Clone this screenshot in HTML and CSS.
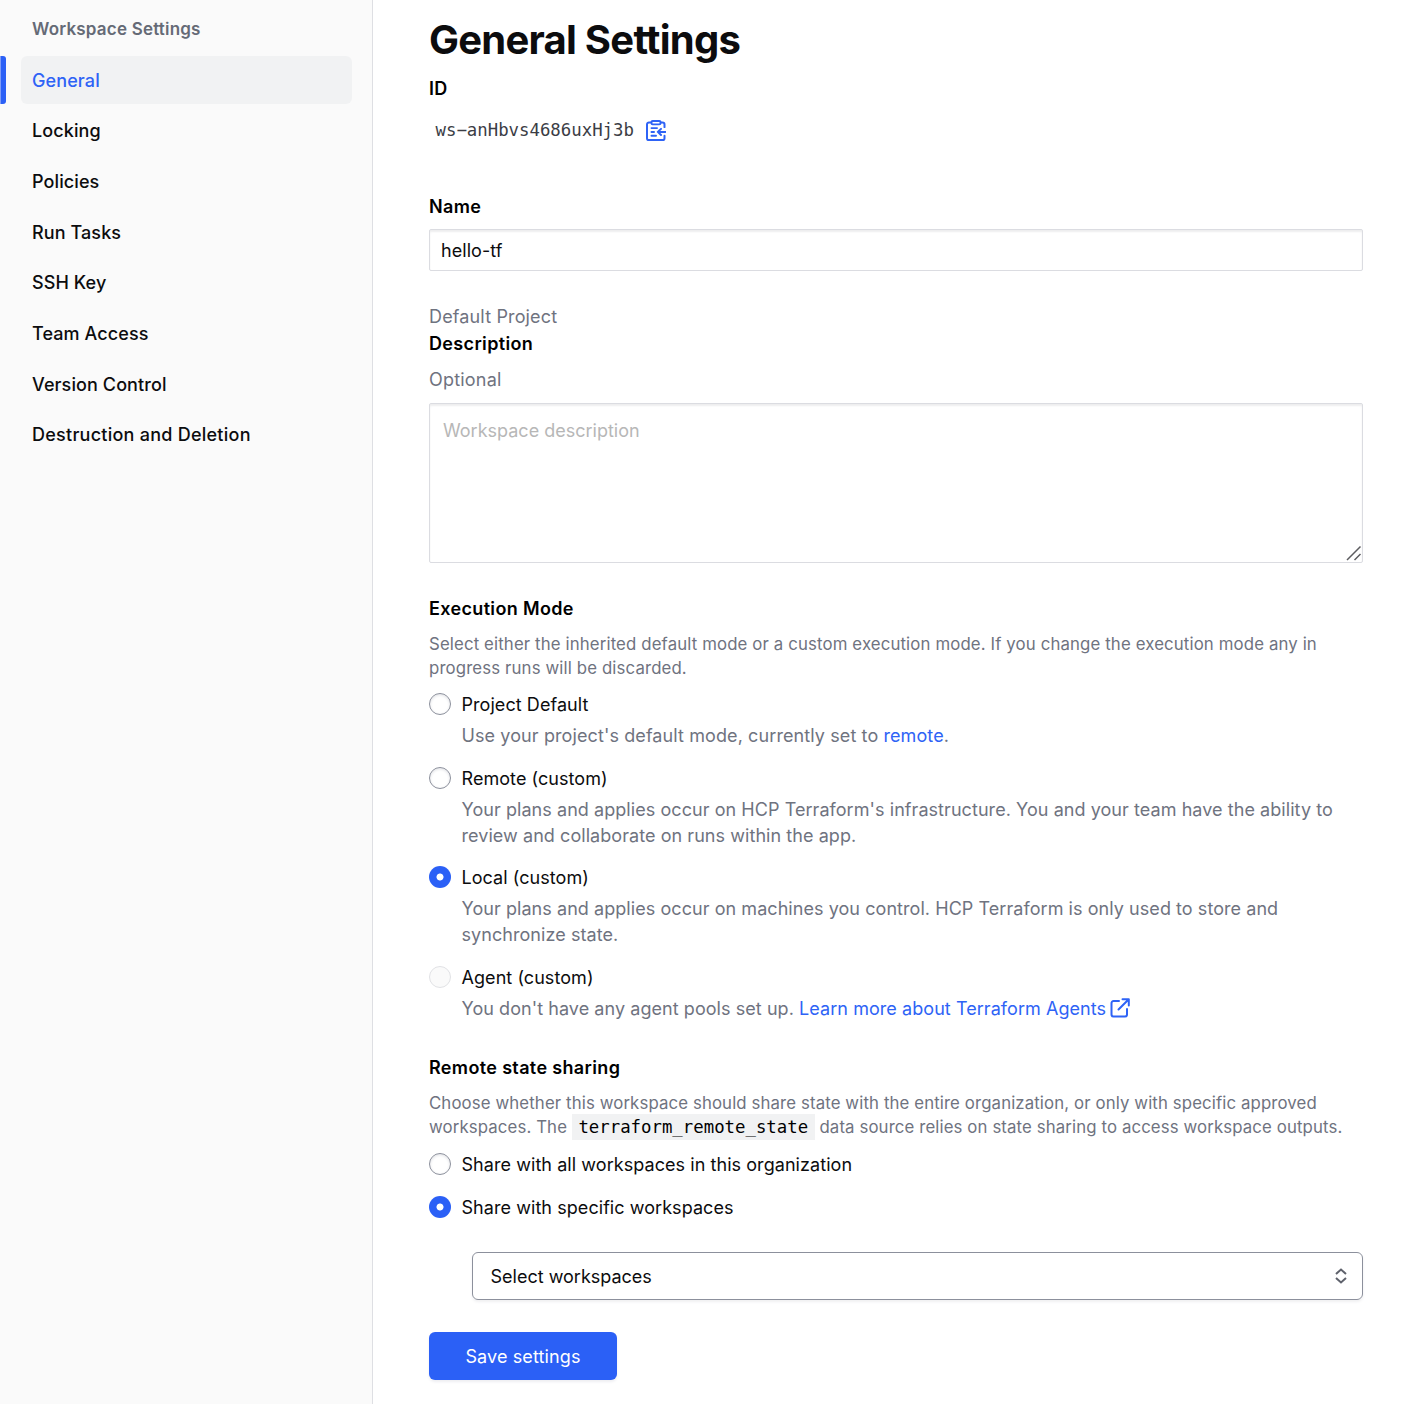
FILE: index.html
```html
<!DOCTYPE html>
<html lang="en">
<head>
<meta charset="utf-8">
<title>General Settings</title>
<link rel="stylesheet" href="styles.css">
</head>
<body>
<div class="app">
  <aside class="sidebar">
    <h2 class="sidebar-title">Workspace Settings</h2>
    <nav class="nav">
      <a class="nav-item active">General</a>
      <a class="nav-item">Locking</a>
      <a class="nav-item">Policies</a>
      <a class="nav-item">Run Tasks</a>
      <a class="nav-item">SSH Key</a>
      <a class="nav-item">Team Access</a>
      <a class="nav-item">Version Control</a>
      <a class="nav-item wide">Destruction and Deletion</a>
    </nav>
  </aside>
  <main class="content">
    <h1 class="title">General Settings</h1>
    <div class="label label-id">ID</div>
    <div class="id-row">
      <span class="id-value">ws−anHbvs4686uxHj3b</span>
      <svg class="icon-copy" viewBox="0 0 20 22" preserveAspectRatio="none" fill="none" stroke="currentColor" stroke-width="2" stroke-linecap="round" stroke-linejoin="round"><path d="M5 2.6H3a2 2 0 0 0-2 2V19a2 2 0 0 0 2 2h13.500a2 2 0 0 0 2-2v-2.500M15 2.600h1.500a2 2 0 0 1 2 2V7.500"/><rect x="5.500" y="1" width="9" height="3.600" rx="1.200"/><path d="M5.500 8.500H11M5.500 12.500H8M5.500 16.500H10M19.500 12.500H12.200M15 9.300l-3.200 3.200 3.200 3.200"/></svg>
    </div>
    <div class="label label-name">Name</div>
    <div class="input">hello-tf</div>
    <div class="project">Default Project</div>
    <div class="label label-description">Description</div>
    <div class="optional">Optional</div>
    <div class="textarea">
      <span class="placeholder">Workspace description</span>
      <svg class="grip" viewBox="0 0 16 16" fill="none" stroke="#5c5c60" stroke-width="1.500"><path d="M1 15 14.500 1.500M8.500 15l6-6"/></svg>
    </div>
    <section class="section">
      <h3 class="label">Execution Mode</h3>
      <p class="help">Select either the inherited default mode or a custom execution mode. If you change the execution mode any in<br>progress runs will be discarded.</p>
      <div class="option"><span class="radio"></span><span class="option-label">Project Default</span>
        <p class="option-text short">Use your project's default mode, currently set to <a class="link">remote</a>.</p></div>
      <div class="option"><span class="radio"></span><span class="option-label">Remote (custom)</span>
        <p class="option-text">Your plans and applies occur on HCP Terraform's infrastructure. You and your team have the ability to<br>review and collaborate on runs within the app.</p></div>
      <div class="option"><span class="radio checked"></span><span class="option-label">Local (custom)</span>
        <p class="option-text">Your plans and applies occur on machines you control. HCP Terraform is only used to store and<br>synchronize state.</p></div>
      <div class="option"><span class="radio disabled"></span><span class="option-label">Agent (custom)</span>
        <p class="option-text">You don't have any agent pools set up. <a class="link">Learn more about Terraform Agents<svg class="icon-external" viewBox="0 0 20 20" fill="none" stroke="currentColor" stroke-width="2" stroke-linecap="round" stroke-linejoin="round"><path d="M9 3H3.500a2 2 0 0 0-2 2v11.500a2 2 0 0 0 2 2H15a2 2 0 0 0 2-2V11M12.500 1.200h6.300v6.300M18.500 1.500 8.500 11.500"/></svg></a></p></div>
    </section>
    <section class="section sharing">
      <h3 class="label">Remote state sharing</h3>
      <p class="help">Choose whether this workspace should share state with the entire organization, or only with specific approved<br>workspaces. The <code class="code">terraform_remote_state</code> data source relies on state sharing to access workspace outputs.</p>
      <div class="option"><span class="radio"></span><span class="option-label">Share with all workspaces in this organization</span></div>
      <div class="option"><span class="radio checked"></span><span class="option-label">Share with specific workspaces</span></div>
    </section>
    <div class="select">
      <span class="select-value">Select workspaces</span>
      <svg class="icon-caret" viewBox="0 0 12 16" fill="none" stroke="#5f626c" stroke-width="2"><path d="M1 6 6 1.500 11 6M1 10l5 4.500L11 10"/></svg>
    </div>
    <button class="save" type="button">Save settings</button>
  </main>
</div>
</body>
</html>
```
FILE: styles.css
```css
* { box-sizing: border-box; }
body {
  margin: 0;
  font: 400 18px/25px Inter, "Liberation Sans", sans-serif;
  letter-spacing: 0.06px;
  color: #0c0c0e;
  background: #fff;
}
h1, h2, h3, p { margin: 0; }
.app { display: flex; min-height: 1404px; }
.sidebar {
  flex: 0 0 373px;
  padding: 17px 20px 0 21px;
  background: #fafafa;
  border-right: 1px solid #dedfe3;
}
.sidebar-title {
  padding-left: 11px;
  font-size: 17px;
  line-height: 25px;
  font-weight: 600;
  letter-spacing: 0.2px;
  color: #656a76;
}
.nav { display: flex; flex-direction: column; gap: 2.650px; margin-top: 13.800px; }
.nav-item {
  position: relative;
  height: 48px;
  padding-left: 11px;
  line-height: 49px;
  font-weight: 500;
  letter-spacing: 0.1px;
  border-radius: 6px;
}
.nav-item.wide { letter-spacing: 0.25px; }
.nav-item.active { color: #2e63f6; background: #f1f2f3; }
.nav-item.active::before {
  content: "";
  position: absolute;
  left: -21px;
  top: 0;
  width: 5px;
  height: 48px;
  background: #2b60f6;
  border-left: 1px solid #7f9df8;
  border-radius: 0 3px 3px 0;
}
.content { flex: 1; padding: 16px 47px 0 56px; }
.title { font-size: 40px; line-height: 48px; font-weight: 700; letter-spacing: -0.750px; }
.label { font-size: 18px; line-height: 25px; font-weight: 600; letter-spacing: 0.350px; color: #000; }
.label-id { margin-top: 12px; }
.id-row {
  display: flex;
  align-items: center;
  height: 25px;
  margin-top: 17px;
  padding-left: 6.500px;
  gap: 12px;
}
.id-value { font: 17.350px/25px "DejaVu Sans Mono", monospace; letter-spacing: 0; color: #3b3d45; }
.icon-copy { width: 20px; height: 21px; color: #2e63f6; }
.label-name { margin-top: 51px; }
.input {
  height: 42px;
  margin-top: 10px;
  padding: 0 11px;
  line-height: 41px;
  border: 1px solid #dbdce1;
  border-radius: 2px;
  box-shadow: inset 0 2px 2px #eeeeef;
}
.project { margin-top: 32px; line-height: 27px; letter-spacing: 0.150px; color: #6f737f; }
.label-description { line-height: 27px; }
.optional { margin-top: 10px; letter-spacing: 0.200px; color: #6f737f; }
.textarea {
  display: flex;
  justify-content: space-between;
  height: 160px;
  margin-top: 11px;
  padding: 14px 0 1px 13px;
  border: 1px solid #dbdce1;
  border-radius: 2px;
  box-shadow: inset 0 2px 2px #eeeeef;
}
.placeholder { letter-spacing: 0; color: #b7b7b7; }
.grip { align-self: flex-end; width: 16px; height: 16px; }
.section { margin-top: 33px; }
.help { margin: 11px 0 12px; font-size: 16.800px; line-height: 24px; letter-spacing: 0.130px; color: #6f737f; white-space: nowrap; }
.option { display: grid; grid-template-columns: 22px 1fr; column-gap: 10.500px; align-items: center; }
.option + .option { margin-top: 16.600px; }
.sharing .help { margin-bottom: 13.200px; letter-spacing: 0.115px; }
.sharing .option { height: 25px; }
.sharing .option + .option { margin-top: 18px; }
.radio {
  width: 22px;
  height: 22px;
  margin-bottom: 0.400px;
  border: 1px solid #8c909c;
  border-radius: 50%;
  box-shadow: inset 0 1px 3px #dfe0e4;
}
.radio.checked { border: 0; background: radial-gradient(circle, #fff 3.100px, #2b60f6 3.900px); box-shadow: none; }
.radio.disabled { border-color: #e1e2e5; background: #fafafa; box-shadow: none; }
.option-text { grid-column: 2; margin-top: 6px; line-height: 26px; color: #6f737f; white-space: nowrap; }
.option-text.short { letter-spacing: 0.100px; }
.link { color: #2e63f6; }
.icon-external { width: 20px; height: 20px; margin-left: 3.500px; vertical-align: -3px; }
.code {
  padding: 3px 6.500px;
  font: 17.350px/24px "DejaVu Sans Mono", monospace;
  letter-spacing: 0;
  color: #000;
  background: #f1f2f3;
}
.select {
  display: flex;
  align-items: center;
  justify-content: space-between;
  height: 48px;
  margin: 32px 0 0 43px;
  padding: 0 15px 0 17.500px;
  border: 1px solid #8c909c;
  border-radius: 6px;
  box-shadow: 0 2px 3px #f0f0f2;
}
.select-value { padding-top: 1px; letter-spacing: 0; }
.icon-caret { width: 12px; height: 16px; }
.save {
  display: block;
  width: 188px;
  height: 48px;
  margin-top: 32px;
  padding: 2px 0 0;
  border: 0;
  border-radius: 6px;
  font: inherit;
  letter-spacing: 0.120px;
  color: #fff;
  background: #2b60f6;
  box-shadow: 0 2px 3px #eeeef2;
}
```
